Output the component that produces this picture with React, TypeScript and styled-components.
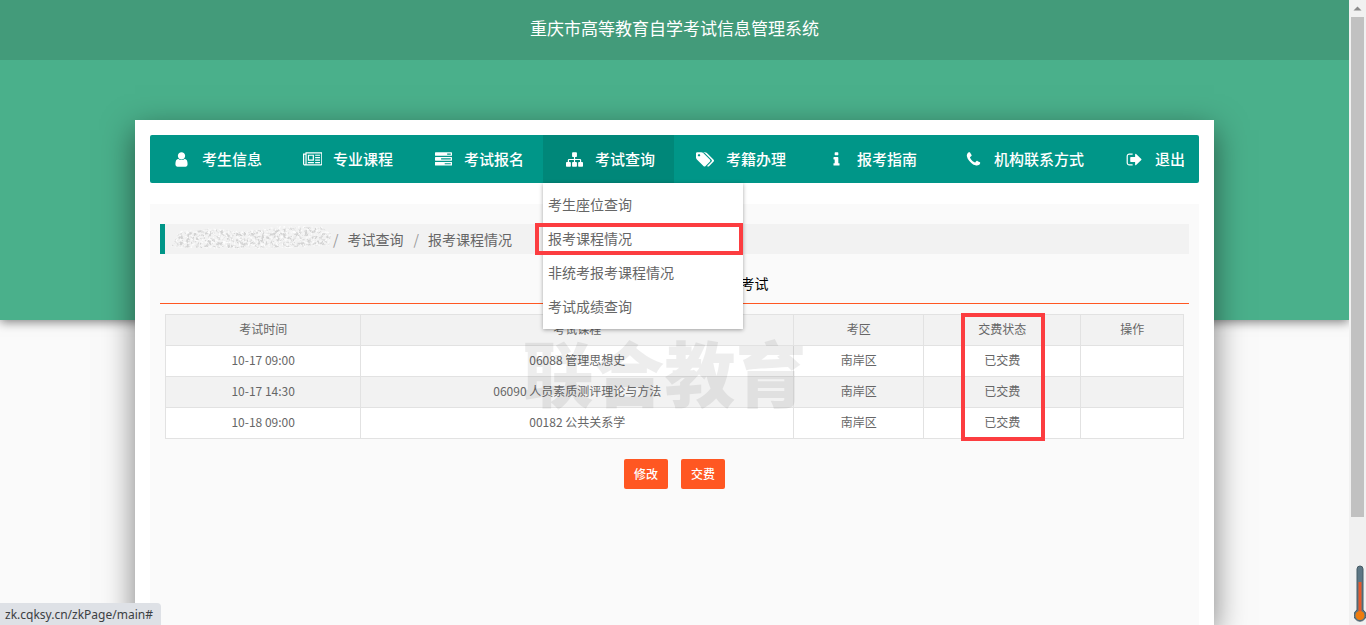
import React from "react";
import styled, { createGlobalStyle } from "styled-components";

const GlobalStyle = createGlobalStyle`
  * { box-sizing: border-box; }
  html, body, #root { height: 100%; }
  body {
    margin: 0;
    overflow: hidden;
    background: #fafafa;
    color: #000;
    font-family: "Noto Sans CJK SC", sans-serif;
    font-size: 14px;
    line-height: 24px;
  }
  a { color: inherit; text-decoration: none; }
  ul, ol { list-style: none; margin: 0; padding: 0; }
`;

const Window = styled.div`
  display: grid;
  grid-template-columns: minmax(0, 1fr) 17px;
  height: 100vh;
`;

const Viewport = styled.div`
  overflow: hidden;
  display: grid;
  grid-template-rows: 60px 60px 1fr;
  grid-template-columns: minmax(0, 1fr);
`;

const Banner = styled.div`
  grid-area: 1 / 1 / 4 / 2;
  height: 320px;
  background: #4ab08b;
  box-shadow: 0 2px 10px rgba(0, 0, 0, 0.5);
`;

const Header = styled.header`
  grid-area: 1 / 1;
  display: flex;
  align-items: center;
  justify-content: center;
  background: #439b7a;
`;

const SystemTitle = styled.h1`
  margin: 0;
  padding-bottom: 4px;
  color: #fff;
  font-size: 17px;
  font-weight: 400;
`;

const Card = styled.main`
  grid-area: 3 / 1;
  width: 80%;
  margin: 0 auto;
  padding: 15px 15px 0;
  display: flex;
  flex-direction: column;
  background: #fff;
  box-shadow: 0 10px 30px rgba(0, 0, 0, 0.5);
`;

const Nav = styled.nav`
  flex: none;
  height: 48px;
  border-radius: 2px;
  background: #009688;
  color: #fff;
  font-size: 15px;
`;

const NavList = styled.ul`
  display: flex;
`;

const NavItem = styled.li<{ $active?: boolean; $wide?: boolean }>`
  position: relative;
  flex: none;
  padding-right: ${(p) => (p.$wide ? 6 : 0)}px;
  background: ${(p) => (p.$active ? "#008779" : "transparent")};
  &:last-child { margin-right: -8px; }
`;

const NavLink = styled.a`
  display: flex;
  align-items: center;
  gap: 9px;
  height: 48px;
  padding: 0 19px 0 20px;
  font-weight: 500;
`;

const IconSlot = styled.span`
  display: flex;
  justify-content: center;
  width: 23px;
  svg { display: block; height: 17px; fill: currentColor; }
`;

const Menu = styled.ul`
  position: absolute;
  z-index: 3;
  top: 48px;
  left: 0;
  width: 200px;
  padding: 4px 0 6px;
  background: #fff;
  box-shadow: 0 1px 4px rgba(0, 0, 0, 0.35);
  color: #666;
  font-size: 14px;
`;

const MenuItem = styled.li`
  position: relative;
`;

const MenuLink = styled.a`
  display: block;
  padding: 0 5px;
  line-height: 34px;
`;

const MenuMark = styled.span`
  position: absolute;
  top: 2px;
  bottom: 0;
  left: -8px;
  right: 0;
  border: 4px solid #fc3d40;
  pointer-events: none;
`;

const Panel = styled.section`
  flex: 1;
  margin-top: 21px;
  padding: 20px 10px;
  background: #fafafa;
`;

const Breadcrumb = styled.ol`
  display: flex;
  align-items: center;
  height: 30px;
  padding-left: 6px;
  border-left: 5px solid #009688;
  background: #f2f2f2;
  color: #666;
  li + li::before {
    content: "/";
    margin: 0 9px 0 10px;
    color: #999;
  }
  li:nth-child(2)::before { margin-left: 0; }
`;

const Masked = styled.svg`
  display: block;
  width: 162px;
  height: 30px;
`;

const ExamTitle = styled.h2`
  margin: 0;
  padding: 17px 0 8px 160px;
  border-bottom: 1px solid #ff5722;
  font-size: 14px;
  font-weight: 400;
  text-align: center;
`;

const TableArea = styled.div`
  position: relative;
  padding: 10px 5px 20px;
`;

const Table = styled.table`
  width: 100%;
  border-collapse: collapse;
  table-layout: fixed;
  background: #fff;
  color: #666;
  font-size: 12px;
  line-height: 20px;
  text-align: center;
  th, td {
    height: 31px;
    padding: 0 0 2px;
    border: 1px solid #e2e2e2;
    font-weight: 400;
  }
  thead tr, tbody tr:nth-child(even) { background: #f2f2f2; }
`;

const StatusHead = styled.th`
  position: relative;
`;

const StatusMark = styled.span`
  position: absolute;
  z-index: 2;
  top: -2px;
  left: calc(50% - 41px);
  width: 84px;
  height: 128px;
  border: 4px solid #fc3d40;
  pointer-events: none;
`;

const Watermark = styled.div`
  position: absolute;
  top: 18px;
  left: 0;
  right: 0;
  padding-right: 20px;
  text-align: center;
  color: rgba(0, 0, 0, 0.07);
  font-size: 71px;
  font-weight: 900;
  line-height: 96px;
  pointer-events: none;
`;

const Actions = styled.div`
  display: flex;
  justify-content: center;
  gap: 13px;
`;

const ActionButton = styled.button`
  height: 30px;
  width: 44px;
  padding: 0 0 2px;
  border: 0;
  border-radius: 2px;
  background: #ff5722;
  color: #fff;
  font: 500 12px "Noto Sans CJK SC", sans-serif;
`;

const StatusBar = styled.div`
  position: fixed;
  left: 0;
  bottom: 0;
  height: 22px;
  padding: 0 8px 0 5px;
  border-radius: 0 4px 0 0;
  background: #dee1e6;
  color: #3c4043;
  font: 12px/23px "Noto Sans", sans-serif;
`;

const Scrollbar = styled.div`
  display: flex;
  flex-direction: column;
  align-items: center;
  background: #f1f1f1;
  svg { display: block; }
`;

const ScrollThumb = styled.div`
  width: 13px;
  height: 80%;
  background: #c1c1c1;
`;

const Thermometer = styled.svg`
  position: fixed;
  right: 0;
  bottom: 2px;
`;

interface Glyph { w: number; d: string }

const glyphs: Record<string, Glyph> = {
  user: { w: 1792, d: "M1536 1399q0 109-62.5 187t-150.5 78h-854q-88 0-150.5-78t-62.5-187q0-85 8.5-160.5t31.5-152 58.5-131 94-89 134.5-34.5q131 128 313 128t313-128q76 0 134.5 34.5t94 89 58.5 131 31.5 152 8.5 160.5zm-256-887q0 159-112.5 271.5t-271.5 112.5-271.5-112.5-112.5-271.5 112.5-271.5 271.5-112.5 271.5 112.5 112.5 271.5z" },
  news: { w: 2048, d: "M1024 512h-384v384h384v-384zm128 640v128h-640v-128h640zm0-768v640h-640v-640h640zm640 768v128h-512v-128h512zm0-256v128h-512v-128h512zm0-256v128h-512v-128h512zm0-256v128h-512v-128h512zm-1536 960v-960h-128v960q0 26 19 45t45 19 45-19 19-45zm1664 0v-1088h-1536v1088q0 33-11 64h1483q26 0 45-19t19-45zm128-1216v1216q0 80-56 136t-136 56h-1664q-80 0-136-56t-56-136v-1088h256v-128h1792z" },
  tasks: { w: 1792, d: "M1024 1408h640v-128h-640v128zm-384-512h1024v-128h-1024v128zm640-512h384v-128h-384v128zm512 832v256q0 26-19 45t-45 19h-1664q-26 0-45-19t-19-45v-256q0-26 19-45t45-19h1664q26 0 45 19t19 45zm0-512v256q0 26-19 45t-45 19h-1664q-26 0-45-19t-19-45v-256q0-26 19-45t45-19h1664q26 0 45 19t19 45zm0-512v256q0 26-19 45t-45 19h-1664q-26 0-45-19t-19-45v-256q0-26 19-45t45-19h1664q26 0 45 19t19 45z" },
  sitemap: { w: 1792, d: "M1792 1248v320q0 40-28 68t-68 28h-320q-40 0-68-28t-28-68v-320q0-40 28-68t68-28h96v-192h-512v192h96q40 0 68 28t28 68v320q0 40-28 68t-68 28h-320q-40 0-68-28t-28-68v-320q0-40 28-68t68-28h96v-192h-512v192h96q40 0 68 28t28 68v320q0 40-28 68t-68 28h-320q-40 0-68-28t-28-68v-320q0-40 28-68t68-28h96v-192q0-52 38-90t90-38h512v-192h-96q-40 0-68-28t-28-68v-320q0-40 28-68t68-28h320q40 0 68 28t28 68v320q0 40-28 68t-68 28h-96v192h512q52 0 90 38t38 90v192h96q40 0 68 28t28 68z" },
  tags: { w: 1920, d: "M448 448q0-53-37.5-90.5t-90.5-37.5-90.5 37.5-37.5 90.5 37.5 90.5 90.5 37.5 90.5-37.5 37.5-90.5zm1067 576q0 53-37 90l-491 492q-39 37-91 37-53 0-90-37l-715-716q-38-37-64.5-101t-26.5-117v-416q0-52 38-90t90-38h416q53 0 117 26.5t102 64.5l715 714q37 39 37 91zm384 0q0 53-37 90l-491 492q-39 37-91 37-36 0-59-14t-53-45l470-470q37-37 37-90 0-52-37-91l-715-714q-38-38-102-64.5t-117-26.5h224q53 0 117 26.5t102 64.5l715 714q37 39 37 91z" },
  info: { w: 1792, d: "M1216 1344v128q0 26-19 45t-45 19h-512q-26 0-45-19t-19-45v-128q0-26 19-45t45-19h64v-384h-64q-26 0-45-19t-19-45v-128q0-26 19-45t45-19h384q26 0 45 19t19 45v576h64q26 0 45 19t19 45zm-128-1152v192q0 26-19 45t-45 19h-256q-26 0-45-19t-19-45v-192q0-26 19-45t45-19h256q26 0 45 19t19 45z" },
  phone: { w: 1792, d: "M1600 1240q0 27-10 70.5t-21 68.5q-21 50-122 106-94 51-186 51-27 0-53-3.5t-57.5-12.5-47-14.5-55.5-20.5-49-18q-98-35-175-83-127-79-264-216t-216-264q-48-77-83-175-3-9-18-49t-20.5-55.5-14.5-47-12.5-57.5-3.5-53q0-92 51-186 56-101 106-122 25-11 68.5-21t70.5-10q14 0 21 3 18 6 53 76 11 19 30 54t35 63.5 31 53.5q3 4 17.5 25t21.5 35.5 7 28.5q0 20-28.5 50t-62 55-62 53-28.5 46q0 9 5 22.5t8.5 20.5 14 24 11.5 19q76 137 174 235t235 174q2 1 19 11.5t24 14 20.5 8.5 22.5 5q18 0 46-28.5t53-62 55-62 50-28.5q14 0 28.5 7t35.5 21.5 25 17.5q25 15 53.5 31t63.5 35 54 30q70 35 76 53 3 7 3 21z" },
  signOut: { w: 1792, d: "M704 1440q0 4 1 20t.5 26.5-3 23.5-10 19.5-20.5 6.5h-320q-119 0-203.5-84.5t-84.5-203.5v-704q0-119 84.5-203.5t203.5-84.5h320q13 0 22.5 9.5t9.5 22.5q0 4 1 20t.5 26.5-3 23.5-10 19.5-20.5 6.5h-320q-66 0-113 47t-47 113v704q0 66 47 113t113 47h312l11.5 1 11.5 3 8 5.5 7 9 2 13.5zm928-544q0 26-19 45l-544 544q-19 19-45 19t-45-19-19-45v-288h-448q-26 0-45-19t-19-45v-384q0-26 19-45t45-19h448v-288q0-26 19-45t45-19 45 19l544 544q19 19 19 45z" },
};

function NavIcon({ name }: { name: string }) {
  const glyph = glyphs[name];
  return (
    <IconSlot>
      <svg viewBox={`0 0 ${glyph.w} 1792`} aria-hidden="true"><path d={glyph.d} /></svg>
    </IconSlot>
  );
}

interface Entry { label: string; icon: string; wide?: boolean; menu?: string[] }

const entries: Entry[] = [
  { label: "考生信息", icon: "user" },
  { label: "专业课程", icon: "news" },
  { label: "考试报名", icon: "tasks" },
  { label: "考试查询", icon: "sitemap", menu: ["考生座位查询", "报考课程情况", "非统考报考课程情况", "考试成绩查询"] },
  { label: "考籍办理", icon: "tags" },
  { label: "报考指南", icon: "info", wide: true },
  { label: "机构联系方式", icon: "phone" },
  { label: "退出", icon: "signOut" },
];

const exams = [
  ["10-17 09:00", "06088 管理思想史", "南岸区", "已交费"],
  ["10-17 14:30", "06090 人员素质测评理论与方法", "南岸区", "已交费"],
  ["10-18 09:00", "00182 公共关系学", "南岸区", "已交费"],
];

const currentPage = "报考课程情况";

export default function App() {
  return (
    <>
      <GlobalStyle />
      <Window>
        <Viewport>
          <Banner />
          <Header><SystemTitle>重庆市高等教育自学考试信息管理系统</SystemTitle></Header>
          <Card>
            <Nav>
              <NavList>
                {entries.map((entry) => (
                  <NavItem key={entry.label} $active={!!entry.menu} $wide={entry.wide}>
                    <NavLink href="#"><NavIcon name={entry.icon} />{entry.label}</NavLink>
                    {entry.menu && (
                      <Menu>
                        {entry.menu.map((label) => (
                          <MenuItem key={label}>
                            <MenuLink href="#">{label}</MenuLink>
                            {label === currentPage && <MenuMark />}
                          </MenuItem>
                        ))}
                      </Menu>
                    )}
                  </NavItem>
                ))}
              </NavList>
            </Nav>
            <Panel>
              <Breadcrumb>
                <li>
                  <Masked viewBox="0 0 162 30" aria-hidden="true">
                    <defs>
                      <filter id="speckle" x="0" y="0" width="1" height="1">
                        <feTurbulence type="fractalNoise" baseFrequency="0.32" numOctaves="3" seed="7" />
                        <feColorMatrix values="0 0 0 0 0.65  0 0 0 0 0.65  0 0 0 0 0.65  0 5 0 0 -2.3" result="dark" />
                        <feComposite in="dark" in2="SourceGraphic" operator="in" />
                      </filter>
                      <filter id="speckleLight" x="0" y="0" width="1" height="1">
                        <feTurbulence type="fractalNoise" baseFrequency="0.4" numOctaves="2" seed="3" />
                        <feColorMatrix values="0 0 0 0 0.98  0 0 0 0 0.98  0 0 0 0 0.98  4 0 0 0 -2" result="light" />
                        <feComposite in="light" in2="SourceGraphic" operator="in" />
                      </filter>
                    </defs>
                    <path filter="url(#speckle)" d="M8 9L40 5 70 8 110 4 150 3 160 10 158 21 120 23 80 24 50 24 20 24 1 22Z" />
                    <path filter="url(#speckleLight)" d="M8 7L40 4 70 7 110 2 150 2 161 10 158 22 120 24 80 25 50 25 20 24 0 23Z" />
                  </Masked>
                </li>
                <li><a href="#">考试查询</a></li>
                <li><a href="#">{currentPage}</a></li>
              </Breadcrumb>
              <ExamTitle>考试</ExamTitle>
              <TableArea>
                <Table>
                  <colgroup>
                    <col width="19.2%" /><col width="42.5%" /><col width="12.8%" /><col width="15.4%" /><col width="10.1%" />
                  </colgroup>
                  <thead>
                    <tr>
                      <th>考试时间</th>
                      <th>考试课程</th>
                      <th>考区</th>
                      <StatusHead>交费状态<StatusMark /></StatusHead>
                      <th>操作</th>
                    </tr>
                  </thead>
                  <tbody>
                    {exams.map((row) => (
                      <tr key={row[0]}>
                        {row.map((cell) => <td key={cell}>{cell}</td>)}
                        <td />
                      </tr>
                    ))}
                  </tbody>
                </Table>
                <Watermark>联合教育</Watermark>
              </TableArea>
              <Actions>
                <ActionButton type="button">修改</ActionButton>
                <ActionButton type="button">交费</ActionButton>
              </Actions>
            </Panel>
          </Card>
        </Viewport>
        <Scrollbar>
          <svg width="17" height="17" viewBox="0 0 17 17" aria-hidden="true"><path d="M4.5 10.5L8.5 6.5 12.5 10.5Z" fill="#8a8a8a" /></svg>
          <ScrollThumb />
        </Scrollbar>
      </Window>
      <StatusBar>zk.cqksy.cn/zkPage/main#</StatusBar>
      <Thermometer width="12" height="58" viewBox="0 0 12 58" aria-hidden="true">
        <path d="M3 4a3 3 0 0 1 6 0v41a6 6 0 1 1-6 0Z" fill="#5d7684" stroke="#455a64" />
        <rect x="4.5" y="17" width="3" height="33" fill="#e4582b" />
        <circle cx="6" cy="50.500" r="4.500" fill="#ef7c0e" />
      </Thermometer>
    </>
  );
}
